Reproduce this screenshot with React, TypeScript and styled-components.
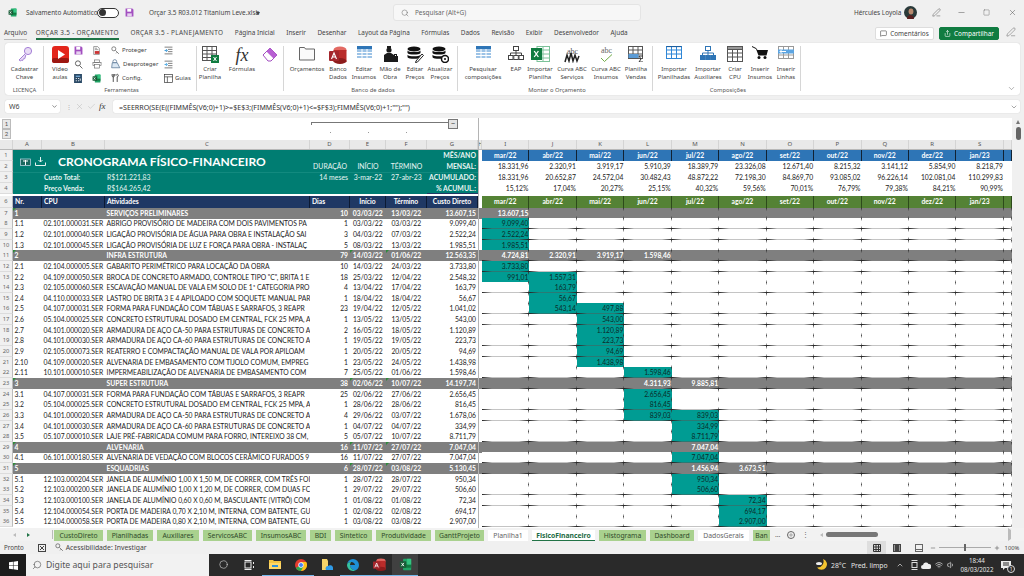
import React from "react";
import styled, { createGlobalStyle } from "styled-components";
import {
  Check,
  ChevronDown,
  Circle,
  MessageSquare,
  Minus,
  PenLine,
  Plus,
  Search,
  Share,
  Square,
  Volume1,
  Wifi,
  X,
} from "lucide-react";

const UI = `"Noto Sans", "Open Sans", sans-serif`;
const CELL = `Lato, "Liberation Sans", sans-serif`;
const COLS = "13px 29px 63px 205px 40px 36px 41px 51px 4px repeat(11, 47.45px) 1fr";

const MONTHS = ["mar/22", "abr/22", "mai/22", "jun/22", "jul/22", "ago/22", "set/22", "out/22", "nov/22", "dez/22", "jan/23"];
const MENSAL = ["18.331,96", "2.320,91", "3.919,17", "5.910,39", "18.389,79", "23.326,08", "12.671,40", "8.215,32", "3.141,12", "5.854,90", "8.218,79"];
const ACUM = ["18.331,96", "20.652,87", "24.572,04", "30.482,43", "48.872,22", "72.198,30", "84.869,70", "93.085,02", "96.226,14", "102.081,04", "110.299,83"];
const PCT = ["15,12%", "17,04%", "20,27%", "25,15%", "40,32%", "59,56%", "70,01%", "76,79%", "79,38%", "84,21%", "90,99%"];
const LETTERS = ["A", "B", "C", "D", "E", "F", "G", "H", "I", "J", "K", "L", "M", "N", "O", "P", "Q", "R", "S"];

type Line = {
  nr: string;
  cpu?: string;
  name: string;
  days: string;
  start: string;
  end: string;
  cost: string;
  months: Record<number, string>;
  band?: boolean;
  flags?: boolean;
};

const FORMA = "FORMA PARA FUNDAÇÃO COM TÁBUAS E SARRAFOS, 3 REAPR";
const CONCRETO = "CONCRETO ESTRUTURAL DOSADO EM CENTRAL, FCK 25 MPA, A";
const CA50 = "ARMADURA DE AÇO CA-50 PARA ESTRUTURAS DE CONCRETO A";
const CA60 = "ARMADURA DE AÇO CA-60 PARA ESTRUTURAS DE CONCRETO A";

const LINES: Line[] = [
  { nr: "1", name: "SERVIÇOS PRELIMINARES", days: "10", start: "03/03/22", end: "13/03/22", cost: "13.607,15", months: { 0: "13.607,15" }, band: true },
  { nr: "1.1", cpu: "02.101.000031.SER", name: "ABRIGO PROVISÓRIO DE MADEIRA COM DOIS PAVIMENTOS PA", days: "1", start: "03/03/22", end: "03/03/22", cost: "9.099,40", months: { 0: "9.099,40" } },
  { nr: "1.2", cpu: "02.101.000040.SER", name: "LIGAÇÃO PROVISÓRIA DE ÁGUA PARA OBRA E INSTALAÇÃO SAI", days: "3", start: "04/03/22", end: "07/03/22", cost: "2.522,24", months: { 0: "2.522,24" } },
  { nr: "1.3", cpu: "02.101.000045.SER", name: "LIGAÇÃO PROVISÓRIA DE LUZ E FORÇA PARA OBRA - INSTALAÇ", days: "5", start: "08/03/22", end: "13/03/22", cost: "1.985,51", months: { 0: "1.985,51" } },
  { nr: "2", name: "INFRA ESTRUTURA", days: "79", start: "14/03/22", end: "01/06/22", cost: "12.563,35", months: { 0: "4.724,81", 1: "2.320,91", 2: "3.919,17", 3: "1.598,46" }, band: true, flags: true },
  { nr: "2.1", cpu: "02.104.000005.SER", name: "GABARITO PERIMÉTRICO PARA LOCAÇÃO DA OBRA", days: "10", start: "14/03/22", end: "24/03/22", cost: "3.733,80", months: { 0: "3.733,80" } },
  { nr: "2.2", cpu: "04.109.000050.SER", name: 'BROCA DE CONCRETO ARMADO, CONTROLE TIPO "C", BRITA 1 E', days: "18", start: "25/03/22", end: "12/04/22", cost: "2.548,32", months: { 0: "991,01", 1: "1.557,31" } },
  { nr: "2.3", cpu: "02.105.000060.SER", name: "ESCAVAÇÃO MANUAL DE VALA EM SOLO DE 1ª CATEGORIA PRO", days: "4", start: "13/04/22", end: "17/04/22", cost: "163,79", months: { 1: "163,79" } },
  { nr: "2.4", cpu: "04.110.000033.SER", name: "LASTRO DE BRITA 3 E 4 APILOADO COM SOQUETE MANUAL PAR", days: "1", start: "18/04/22", end: "18/04/22", cost: "56,67", months: { 1: "56,67" } },
  { nr: "2.5", cpu: "04.107.000031.SER", name: FORMA, days: "23", start: "19/04/22", end: "12/05/22", cost: "1.041,02", months: { 1: "543,14", 2: "497,88" } },
  { nr: "2.6", cpu: "05.104.000025.SER", name: CONCRETO, days: "1", start: "13/05/22", end: "13/05/22", cost: "543,00", months: { 2: "543,00" } },
  { nr: "2.7", cpu: "04.101.000020.SER", name: CA50, days: "2", start: "16/05/22", end: "18/05/22", cost: "1.120,89", months: { 2: "1.120,89" } },
  { nr: "2.8", cpu: "04.101.000030.SER", name: CA60, days: "1", start: "19/05/22", end: "19/05/22", cost: "223,73", months: { 2: "223,73" } },
  { nr: "2.9", cpu: "02.105.000073.SER", name: "REATERRO E COMPACTAÇÃO MANUAL DE VALA POR APILOAM", days: "1", start: "20/05/22", end: "20/05/22", cost: "94,69", months: { 2: "94,69" } },
  { nr: "2.10", cpu: "04.109.000020.SER", name: "ALVENARIA DE EMBASAMENTO COM TIJOLO COMUM, EMPREG", days: "1", start: "23/05/22", end: "24/05/22", cost: "1.438,98", months: { 2: "1.438,98" } },
  { nr: "2.11", cpu: "10.101.000010.SER", name: "IMPERMEABILIZAÇÃO DE ALVENARIA DE EMBASAMENTO COM", days: "7", start: "25/05/22", end: "01/06/22", cost: "1.598,46", months: { 3: "1.598,46" } },
  { nr: "3", name: "SUPER ESTRUTURA", days: "38", start: "02/06/22", end: "10/07/22", cost: "14.197,74", months: { 3: "4.311,93", 4: "9.885,81" }, band: true, flags: true },
  { nr: "3.1", cpu: "04.107.000031.SER", name: FORMA, days: "25", start: "02/06/22", end: "27/06/22", cost: "2.656,45", months: { 3: "2.656,45" } },
  { nr: "3.2", cpu: "05.104.000025.SER", name: CONCRETO, days: "1", start: "28/06/22", end: "28/06/22", cost: "816,45", months: { 3: "816,45" } },
  { nr: "3.3", cpu: "04.101.000020.SER", name: CA50, days: "4", start: "29/06/22", end: "03/07/22", cost: "1.678,06", months: { 3: "839,03", 4: "839,03" } },
  { nr: "3.4", cpu: "04.101.000030.SER", name: CA60, days: "1", start: "04/07/22", end: "04/07/22", cost: "334,99", months: { 4: "334,99" } },
  { nr: "3.5", cpu: "05.107.000010.SER", name: "LAJE PRÉ-FABRICADA COMUM PARA FORRO, INTEREIXO 38 CM,", days: "5", start: "05/07/22", end: "10/07/22", cost: "8.711,79", months: { 4: "8.711,79" } },
  { nr: "4", name: "ALVENARIA", days: "16", start: "11/07/22", end: "27/07/22", cost: "7.047,04", months: { 4: "7.047,04" }, band: true, flags: true },
  { nr: "4.1", cpu: "06.101.000180.SER", name: "ALVENARIA DE VEDAÇÃO COM BLOCOS CERÂMICO FURADOS 9", days: "16", start: "11/07/22", end: "27/07/22", cost: "7.047,04", months: { 4: "7.047,04" } },
  { nr: "5", name: "ESQUADRIAS", days: "6", start: "28/07/22", end: "03/08/22", cost: "5.130,45", months: { 4: "1.456,94", 5: "3.673,51" }, band: true, flags: true },
  { nr: "5.1", cpu: "12.103.000204.SER", name: "JANELA DE ALUMÍNIO 1,00 X 1,50 M, DE CORRER, COM TRÊS FOI", days: "1", start: "28/07/22", end: "28/07/22", cost: "950,34", months: { 4: "950,34" } },
  { nr: "5.2", cpu: "12.103.000200.SER", name: "JANELA DE ALUMÍNIO 1,00 X 1,20 M, DE CORRER, COM DUAS FC", days: "1", start: "29/07/22", end: "29/07/22", cost: "506,60", months: { 4: "506,60" } },
  { nr: "5.3", cpu: "12.103.000100.SER", name: "JANELA DE ALUMÍNIO 0,60 X 0,60 M, BASCULANTE (VITRÔ) COM", days: "1", start: "01/08/22", end: "01/08/22", cost: "72,34", months: { 5: "72,34" } },
  { nr: "5.4", cpu: "12.104.000054.SER", name: "PORTA DE MADEIRA 0,70 X 2,10 M, INTERNA, COM BATENTE, GU", days: "1", start: "02/08/22", end: "02/08/22", cost: "694,17", months: { 5: "694,17" } },
  { nr: "5.5", cpu: "12.104.000058.SER", name: "PORTA DE MADEIRA 0,80 X 2,10 M, INTERNA, COM BATENTE, GU", days: "1", start: "03/08/22", end: "03/08/22", cost: "2.907,00", months: { 5: "2.907,00" } },
];

const TABS = [
  { label: "CustoDireto", w: 49 },
  { label: "Planilhadas", w: 46 },
  { label: "Auxiliares", w: 42 },
  { label: "ServicosABC", w: 49 },
  { label: "InsumosABC", w: 50 },
  { label: "BDI", w: 21 },
  { label: "Sintetico", w: 37 },
  { label: "Produtividade", w: 55 },
  { label: "GanttProjeto", w: 49 },
  { label: "Planilha1", w: 40, plain: true },
  { label: "FisicoFinanceiro", w: 63, active: true },
  { label: "Histograma", w: 47 },
  { label: "Dashboard", w: 44 },
  { label: "DadosGerais", w: 51, plain: true },
  { label: "Ban", w: 17 },
];

const GlobalStyle = createGlobalStyle`
  html, body { margin: 0; padding: 0; background: #f0f0f0; }
  * { box-sizing: border-box; }
`;

const Windowed = styled.div`
  width: 1024px;
  height: 576px;
  display: flex;
  flex-direction: column;
  overflow: hidden;
  background: #f0f0f0;
  font-family: ${UI};
  font-size: 6.4px;
  color: #444;
  white-space: nowrap;
`;

/* title bar */
const TitleBar = styled.div`
  height: 25px;
  display: flex;
  align-items: center;
  padding-left: 8px;
  flex: none;
`;
const AutoSave = styled.span`
  margin-left: 9px;
  width: 71px;
`;
const Toggle = styled.span`
  width: 22px;
  height: 10px;
  border: 1px solid #333;
  border-radius: 5px;
  background: #fff;
  display: flex;
  align-items: center;
  padding-left: 1px;
  margin-right: 6px;
  &::before {
    content: "";
    width: 7px;
    height: 7px;
    border-radius: 50%;
    background: #333;
  }
`;
const DocName = styled.span`
  margin-left: 15px;
  width: 107px;
`;
const Caret = styled.span`
  width: 0;
  height: 0;
  border: 2px solid transparent;
  border-top: 3px solid #444;
  margin-top: 3px;
`;
const SearchBox = styled.div`
  margin-left: 133px;
  width: 248px;
  height: 17px;
  background: #f7f7f7;
  border: 1px solid #e4e4e4;
  border-radius: 3px;
  display: flex;
  align-items: center;
  gap: 6px;
  padding-left: 7px;
  color: #666;
`;
const UserName = styled.span`
  margin-left: 213px;
  width: 50px;
`;
const WinControls = styled.div`
  display: flex;
  align-items: center;
  margin-left: 4px;
`;
const WinSlot = styled.span<{ $w: number }>`
  width: ${(p) => p.$w}px;
  display: flex;
  justify-content: center;
  color: #444;
`;

/* menu */
const MenuBar = styled.div`
  height: 18px;
  flex: none;
  display: flex;
  padding-left: 4px;
  gap: 11.5px;
`;
const MenuItem = styled.span<{ $on?: boolean; $muted?: boolean; $caps?: boolean }>`
  height: 15px;
  padding-top: 3px;
  line-height: 10px;
  letter-spacing: ${(p) => (p.$caps ? "0.3px" : "0")};
  margin-right: ${(p) => (p.$muted ? "-3px" : "0")};
  border-bottom: ${(p) => (p.$on ? "2px solid #217346" : p.$muted ? "1px solid #bbb" : "none")};
`;
const MenuRight = styled.div`
  margin-left: auto;
  display: flex;
  align-items: flex-start;
  padding: 2px 8px 0 0;
  gap: 5px;
`;
const CommentBtn = styled.span`
  width: 59px;
  height: 13px;
  background: #fff;
  border: 1px solid #ddd;
  border-radius: 2px;
  display: flex;
  align-items: center;
  justify-content: center;
  gap: 3px;
`;
const ShareBtn = styled(CommentBtn)`
  width: 60px;
  margin-right: 2px;
  background: #107c41;
  border-color: #107c41;
  color: #fff;
`;

/* ribbon */
const Ribbon = styled.div`
  height: 52px;
  flex: none;
  margin: 0 4px 0 5px;
  background: #fff;
  border-radius: 3px;
  box-shadow: 0 0 1px #bbb;
  display: flex;
  position: relative;
`;
const Group = styled.div<{ $w: number; $pad?: number }>`
  width: ${(p) => p.$w}px;
  padding-left: ${(p) => p.$pad || 0}px;
  position: relative;
  display: flex;
  flex-direction: column;
  &::after {
    content: "";
    position: absolute;
    right: 0;
    top: 3px;
    bottom: 4px;
    width: 1px;
    background: #d6d6d6;
  }
`;
const GroupBody = styled.div`
  display: flex;
  height: 43px;
`;
const GroupLabel = styled.div`
  font-size: 5.8px;
  line-height: 8px;
  text-align: center;
  color: #555;
`;
const Tool = styled.div<{ $w: number }>`
  width: ${(p) => p.$w}px;
  display: flex;
  flex-direction: column;
  align-items: center;
  padding-top: 3px;
  font-size: 6px;
  line-height: 8px;
`;
const ToolIcon = styled.div`
  height: 19px;
  display: flex;
  align-items: flex-start;
  justify-content: center;
`;
const SmallCol = styled.div<{ $w: number; $ml?: number }>`
  width: ${(p) => p.$w}px;
  margin-left: ${(p) => p.$ml || 0}px;
  display: flex;
  flex-direction: column;
  font-size: 6px;
`;
const SmallRow = styled.div`
  height: 14px;
  display: flex;
  align-items: center;
  gap: 2px;
`;
const Fx = styled.span<{ $size: number }>`
  font-family: "Liberation Serif", serif;
  font-style: italic;
  font-size: ${(p) => p.$size}px;
  color: #333;
  line-height: 1;
`;
const RibbonChevron = styled.span`
  position: absolute;
  right: 4px;
  bottom: 2px;
  color: #666;
  display: flex;
`;

/* formula bar */
const FormulaBar = styled.div`
  height: 13px;
  flex: none;
  margin: 5px 4px 5px 5px;
  display: flex;
  align-items: center;
`;
const NameBox = styled.div`
  width: 55px;
  height: 13px;
  background: #fff;
  border-radius: 2px;
  box-shadow: 0 0 1px #bbb;
  display: flex;
  align-items: center;
  justify-content: space-between;
  padding: 0 2px 0 4px;
  font-size: 7px;
`;
const FxButtons = styled.div`
  width: 53px;
  display: flex;
  align-items: center;
  gap: 3px;
  color: #aaa;
  padding-left: 6px;
`;
const FormulaInput = styled.div`
  flex: 1;
  height: 13px;
  background: #fff;
  border-radius: 2px;
  box-shadow: 0 0 1px #bbb;
  display: flex;
  align-items: center;
  justify-content: space-between;
  padding: 0 2px 0 6px;
  font-size: 7.1px;
  color: #333;
`;

/* sheet */
const SheetWrap = styled.div`
  height: 410px;
  flex: none;
  display: flex;
  position: relative;
`;
const Sheet = styled.div`
  flex: 1;
  min-width: 0;
  background: #fff;
  overflow: hidden;
  font-family: ${CELL};
  font-size: 6.75px;
  color: #222;
`;
const FreezeLine = styled.div`
  position: absolute;
  left: 478px;
  top: 0;
  bottom: 0;
  width: 1px;
  background: #b4b4b4;
`;
const OutlineStrip = styled.div`
  height: 22px;
  display: flex;
`;
const OutlineNums = styled.div`
  width: 13px;
  padding: 1px 0 0 2px;
`;
const OutlineNum = styled.div`
  width: 9px;
  height: 10px;
  background: #e8e8e8;
  border: 1px solid #bbb;
  font-size: 6px;
  line-height: 8px;
  text-align: center;
  color: #555;
`;
const OutlineTrack = styled.div`
  margin-left: 298px;
  width: 147px;
  position: relative;
  padding-top: 4px;
`;
const OutlineLine = styled.div`
  height: 3px;
  width: 138px;
  border-top: 1px solid #777;
  border-left: 1px solid #777;
`;
const OutlineDots = styled.div`
  display: flex;
  gap: 37px;
  padding: 7px 0 0 19px;
`;
const OutlineDot = styled.i`
  width: 1px;
  height: 1px;
  background: #999;
`;
const OutlineMinus = styled.div`
  position: absolute;
  left: 137px;
  top: 1px;
  width: 10px;
  height: 10px;
  background: #e4e4e4;
  border: 1px solid #777;
  font-size: 8px;
  line-height: 6px;
  text-align: center;
  color: #333;
`;
const ColHead = styled.div`
  display: grid;
  grid-template-columns: ${COLS};
  height: 10px;
  background: #e9e9e9;
  border-bottom: 1px solid #b8b8b8;
`;
const ColCell = styled.div`
  text-align: center;
  font-family: ${UI};
  font-size: 6px;
  line-height: 9px;
  color: #555;
  border-right: 1px solid #d4d4d4;
  overflow: hidden;
`;
const HeadGrid = styled.div`
  display: grid;
  grid-template-columns: ${COLS};
  grid-template-rows: repeat(4, 11px);
  margin-bottom: 2px;
`;
const RowNum = styled.div<{ $r?: number }>`
  grid-column: 1;
  grid-row: ${(p) => p.$r || "auto"};
  background: #f0f0f0;
  border-right: 1px solid #bbb;
  border-bottom: 1px solid #dcdcdc;
  font-family: ${UI};
  font-weight: 400;
  font-size: 5.8px;
  line-height: 10px;
  text-align: center;
  color: #666;
`;
const TealBand = styled.div`
  grid-column: 2 / 9;
  grid-row: 1 / 5;
  background: linear-gradient(#007d72 22px, #128a7f 22px, #128a7f 23px, #007d72 23px);
`;
const TitleBox = styled.div`
  grid-column: 2 / 6;
  grid-row: 1 / 3;
  display: flex;
  align-items: center;
  padding-left: 7px;
  gap: 4px;
  color: #fff;
`;
const Title = styled.span`
  margin-left: 8px;
  font-size: 12px;
  font-weight: 700;
  letter-spacing: 0.05px;
`;
const TealText = styled.div<{ $c: number; $r: number; $align?: string; $bold?: boolean; $under?: boolean }>`
  grid-column: ${(p) => p.$c};
  grid-row: ${(p) => p.$r};
  color: #e8f5f3;
  font-weight: ${(p) => (p.$bold ? 700 : 400)};
  text-align: ${(p) => p.$align || "left"};
  padding: 0 2px;
  line-height: 11px;
  font-size: 6.9px;
  border-bottom: ${(p) => (p.$under ? "1px solid #1f3864" : "none")};
`;
const MonthTop = styled.div<{ $c: number; $r: number; $head?: boolean }>`
  grid-column: ${(p) => p.$c};
  grid-row: ${(p) => p.$r};
  text-align: ${(p) => (p.$head ? "center" : "right")};
  line-height: 11px;
  padding-right: ${(p) => (p.$head ? 0 : 1)}px;
  background: ${(p) => (p.$head ? "#2e75b6" : "transparent")};
  color: ${(p) => (p.$head ? "#fff" : "#222")};
  font-weight: ${(p) => (p.$head ? 700 : 400)};
  border-right: ${(p) => (p.$head ? "1px solid #123" : "none")};
`;
const Row = styled.div<{ $head?: boolean; $band?: boolean }>`
  display: grid;
  grid-template-columns: ${COLS};
  height: ${(p) => (p.$head ? "11.7px" : "10.65px")};
  line-height: ${(p) => (p.$head ? "11.7px" : "10.65px")};
  color: ${(p) => (p.$band ? "#fff" : "#222")};
  font-weight: ${(p) => (p.$band ? 700 : 400)};
`;
const Cell = styled.div<{ $align?: string; $flag?: boolean; $band?: boolean }>`
  position: relative;
  overflow: hidden;
  padding: 0 2px 0 1.5px;
  text-align: ${(p) => p.$align || "left"};
  background: ${(p) => (p.$band ? "#7f7f7f" : "transparent")};
  &::before {
    content: "";
    display: ${(p) => (p.$flag ? "block" : "none")};
    position: absolute;
    left: 0;
    top: 0;
    border-top: 3px solid #2f8a3b;
    border-right: 3px solid transparent;
  }
`;
const NavyCell = styled.div<{ $align?: string }>`
  background: #1f3864;
  color: #fff;
  font-weight: 700;
  padding: 0 2px;
  text-align: ${(p) => p.$align || "left"};
  border-right: 1px solid #0c1a33;
`;
const GreenCell = styled.div`
  background: #548235;
  color: #fff;
  font-weight: 700;
  text-align: center;
  border-right: 1px solid #2d4a1b;
`;
const MonthCell = styled.div<{ $fill?: boolean; $band?: boolean }>`
  position: relative;
  padding-right: 1px;
  text-align: right;
  background-color: ${(p) => (p.$band ? "#7f7f7f" : p.$fill ? "#009c93" : "#fff")};
  color: ${(p) => (p.$band ? "#fff" : "#0b2b2a")};
  &::after {
    content: "";
    position: absolute;
    left: 0;
    right: 0;
    bottom: 0;
    height: 1px;
    background: linear-gradient(
      90deg,
      #222,
      ${(p) => (p.$band ? "#7f7f7f" : p.$fill ? "#2a7a74" : "#c4c4c4")} 10px,
      ${(p) => (p.$band ? "#7f7f7f" : p.$fill ? "#2a7a74" : "#c4c4c4")} calc(100% - 10px),
      #222
    );
  }
  &::before {
    content: "";
    position: absolute;
    right: 0;
    top: 0;
    bottom: 0;
    width: 1px;
    background: linear-gradient(180deg, #333, transparent 30%, transparent 70%, #333);
  }
`;

/* scrollbar */
const VScroll = styled.div`
  width: 12px;
  flex: none;
  display: flex;
  flex-direction: column;
  align-items: center;
  padding-top: 2px;
  background: #f0f0f0;
`;
const ArrowUp = styled.i`
  border: 2.5px solid transparent;
  border-bottom: 4px solid #777;
  border-top: 0;
`;
const VThumb = styled.div`
  margin-top: 3px;
  width: 5px;
  height: 13px;
  border-radius: 3px;
  background: #666;
`;

/* tabs */
const TabBar = styled.div`
  height: 13px;
  flex: none;
  display: flex;
  align-items: stretch;
  background: #f2f2f2;
  font-size: 6.8px;
`;
const TabNav = styled.div`
  width: 53px;
  display: flex;
  align-items: center;
  border-right: 1px solid #bbb;
  gap: 11px;
  padding-left: 13px;
  margin: 2px 0;
`;
const NavArrow = styled.i<{ $dark?: boolean; $left?: boolean }>`
  border: 2px solid transparent;
  border-left: ${(p) => (p.$left ? "0" : `3px solid ${p.$dark ? "#217346" : "#bbb"}`)};
  border-right: ${(p) => (p.$left ? `3px solid ${p.$dark ? "#217346" : "#bbb"}` : "0")};
`;
const Tabs = styled.div`
  display: flex;
  gap: 4px;
  padding-top: 2px;
  margin-left: 1px;
`;
const Tab = styled.div<{ $w: number; $plain?: boolean; $active?: boolean }>`
  width: ${(p) => p.$w}px;
  display: flex;
  align-items: center;
  justify-content: center;
  overflow: hidden;
  background: ${(p) => (p.$plain || p.$active ? "#fff" : "#a9d18e")};
  color: ${(p) => (p.$active ? "#1a6a43" : p.$plain ? "#666" : "#2f4a2a")};
  font-weight: ${(p) => (p.$active ? 700 : 400)};
  border-bottom: ${(p) => (p.$active ? "1px solid #217346" : "none")};
`;
const TabExtras = styled.div`
  width: 47px;
  display: flex;
  align-items: center;
  gap: 7px;
  padding-left: 5px;
  color: #666;
`;
const AddSheet = styled.span`
  width: 8px;
  height: 8px;
  border: 1px solid #666;
  border-radius: 50%;
  display: flex;
  align-items: center;
  justify-content: center;
`;
const HScroll = styled.div`
  flex: 1;
  display: flex;
  align-items: center;
  padding: 0 13px 0 3px;
`;
const HThumb = styled.div`
  margin-left: 3px;
  width: 52px;
  height: 5px;
  border-radius: 3px;
  background: #777;
`;
const HEnd = styled.div`
  margin-left: auto;
`;

/* status */
const StatusBar = styled.div`
  height: 13px;
  flex: none;
  display: flex;
  align-items: center;
  padding-left: 4px;
  font-size: 6.2px;
  color: #444;
`;
const StatusCheck = styled.span`
  margin-left: 14px;
  display: flex;
`;
const StatusAccess = styled.span`
  margin-left: 9px;
  display: flex;
  align-items: center;
  gap: 2px;
  font-size: 6.8px;
`;
const StatusRight = styled.div`
  margin-left: auto;
  display: flex;
  align-items: center;
  height: 100%;
`;
const ViewBtn = styled.span<{ $on?: boolean; $w: number }>`
  width: ${(p) => p.$w}px;
  height: 100%;
  display: flex;
  align-items: center;
  justify-content: center;
  background: ${(p) => (p.$on ? "#dedede" : "transparent")};
`;
const ZoomTrack = styled.div`
  width: 52px;
  height: 1px;
  margin: 0 3px;
  background: #aaa;
  position: relative;
`;
const ZoomThumb = styled.i`
  position: absolute;
  left: 25px;
  top: -3px;
  width: 2px;
  height: 7px;
  background: #666;
`;
const ZoomPct = styled.span`
  width: 24px;
  text-align: center;
  font-size: 5.8px;
`;

/* taskbar */
const Taskbar = styled.div`
  height: 22px;
  flex: none;
  background: #2a2a2a;
  display: flex;
  align-items: stretch;
  color: #e6e6e6;
`;
const StartBtn = styled.div`
  width: 26px;
  background: #1c1c1c;
  display: flex;
  align-items: center;
  justify-content: center;
`;
const TaskSearch = styled.div`
  width: 183px;
  background: #f2f2f2;
  display: flex;
  align-items: center;
  gap: 4px;
  padding-left: 6px;
  color: #555;
  font-size: 8.7px;
`;
const TaskApps = styled.div`
  display: flex;
  margin-left: 1px;
`;
const TaskApp = styled.div<{ $w: number; $on?: boolean; $open?: boolean }>`
  width: ${(p) => p.$w}px;
  display: flex;
  align-items: center;
  justify-content: center;
  background: ${(p) => (p.$on ? "#404040" : "transparent")};
  border-bottom: 1px solid ${(p) => (p.$open ? "#76b9ed" : "transparent")};
`;
const Tray = styled.div`
  margin-left: auto;
  display: flex;
  align-items: center;
  font-size: 6.8px;
`;
const TrayText = styled.span<{ $w: number }>`
  width: ${(p) => p.$w}px;
`;
const TrayIcon = styled.span<{ $w: number }>`
  width: ${(p) => p.$w}px;
  display: flex;
  justify-content: center;
`;
const Clock = styled.div`
  width: 42px;
  text-align: center;
  font-size: 6.2px;
  line-height: 9px;
`;
const NotifyBox = styled.div`
  width: 26px;
  padding-right: 10px;
  display: flex;
  justify-content: center;
  position: relative;
`;
const NotifyBadge = styled.span`
  position: absolute;
  right: 9px;
  bottom: -3px;
  width: 8px;
  height: 8px;
  border-radius: 50%;
  border: 1px solid #ddd;
  background: #2a2a2a;
  font-size: 5.5px;
  line-height: 6px;
  text-align: center;
`;

/* drawings */
const ExcelMark = ({ s = 9 }: { s?: number }) => (
  <svg width={s} height={s} viewBox="0 0 16 16">
    <rect x="5" y="1" width="10" height="14" rx="1" fill="#21a366" />
    <rect x="5" y="8" width="10" height="4" fill="#107c41" />
    <rect x="10" y="1" width="5" height="7" fill="#33c481" />
    <rect x="1" y="4" width="8" height="8" rx="1" fill="#185c37" />
    <path d="M3 6l3 4M6 6l-3 4" stroke="#fff" strokeWidth="1.1" />
  </svg>
);
const Floppy = ({ s = 9 }: { s?: number }) => (
  <svg width={s} height={s} viewBox="0 0 16 16">
    <path d="M1 1h12l2 2v12H1z" fill="#a24fc0" />
    <rect x="4" y="1.5" width="7" height="5" fill="#fff" />
    <rect x="4" y="9.5" width="8" height="5.5" fill="#e6d2ee" />
  </svg>
);
const KeyIcon = () => (
  <svg width="16" height="16" viewBox="0 0 16 16" fill="#e9dcf5" stroke="#a47fd6" strokeWidth="1">
    <circle cx="11" cy="5" r="3.6" />
    <path d="M8.5 7.5L2 14l1.6 1 1-1 1 .6.8-1.8 1.4-.2 1-3.6" />
  </svg>
);
const VideoIcon = () => (
  <svg width="17" height="17" viewBox="0 0 17 17">
    <rect width="17" height="17" rx="3" fill="#e3261c" />
    <rect y="12" width="17" height="5" rx="2" fill="#9c1712" />
    <path d="M6 4l7 4.5L6 13z" fill="#fff" />
  </svg>
);
const TinyDoc = () => (
  <svg width="9" height="9" viewBox="0 0 16 16">
    <path d="M3 1h7l3 3v11H3z" fill="#fff" stroke="#555" />
    <rect x="5" y="9" width="8" height="5" fill="#c33" />
    <path d="M5 4h4M5 6.5h6" stroke="#555" />
  </svg>
);
const TinySearch = () => (
  <svg width="9" height="9" viewBox="0 0 16 16" fill="none" stroke="#555" strokeWidth="1.6">
    <circle cx="7" cy="6" r="4.5" />
    <path d="M10 10l5 5" />
  </svg>
);
const TinyPrinter = () => (
  <svg width="10" height="10" viewBox="0 0 16 16" fill="none" stroke="#666">
    <rect x="4" y="1.5" width="8" height="4" />
    <rect x="1.5" y="5.5" width="13" height="5" />
    <rect x="4" y="9" width="8" height="5.5" fill="#fff" />
  </svg>
);
const TinyCalc = () => (
  <svg width="8" height="9" viewBox="0 0 14 16">
    <rect width="14" height="16" fill="#2b4a66" />
    <path d="M3 4h8" stroke="#7fb7e8" strokeWidth="2" />
    <path d="M3 8h2M7 8h2M3 12h2M7 12h2M11 8v4" stroke="#fff" strokeWidth="1.5" />
  </svg>
);
const KeyGlass = ({ fill = "#fff" }: { fill?: string }) => (
  <svg width="9" height="9" viewBox="0 0 16 16" fill={fill} stroke="#444" strokeWidth="1.1">
    <circle cx="5" cy="5" r="3.6" />
    <path d="M8 8l6 6M11 11l-2 2" />
  </svg>
);
const LockGlass = () => (
  <svg width="10" height="10" viewBox="0 0 16 16" fill="none" stroke="#4a6a8a" strokeWidth="1.1">
    <path d="M6 1a3 3 0 013 3v2H3V4a3 3 0 013-3z" />
    <path d="M2 6h8l4 8H1z" fill="#dbe8f4" />
  </svg>
);
const Tools = () => (
  <svg width="9" height="10" viewBox="0 0 16 16" fill="none" stroke="#333" strokeWidth="1.5">
    <path d="M4 1v4M2 1v3a2 2 0 004 0V1M4 6v9" />
    <path d="M11 1a3 3 0 012 3c0 1-1 2-2 2v9M9 1v3" />
  </svg>
);
const IndentLines = ({ color = "#1e88d2" }: { color?: string }) => (
  <svg width="9" height="9" viewBox="0 0 16 16" stroke="#333" strokeWidth="1.1">
    <path d="M1 2h14M7 6h8M7 10h8M1 14h14" />
    <path d="M1 8h4M3.5 5.5L6 8l-2.5 2.5" stroke={color} fill="none" strokeWidth="1.5" />
  </svg>
);
const GridTiny = () => (
  <svg width="9" height="9" viewBox="0 0 16 16" fill="none" stroke="#333" strokeWidth="1.2">
    <rect x="1" y="1" width="14" height="14" />
    <path d="M1 5h14M6 5v10" />
  </svg>
);
const SheetNew = () => (
  <svg width="17" height="17" viewBox="0 0 17 17" fill="none" stroke="#555">
    <rect x=".5" y=".5" width="14" height="14" />
    <path d="M.5 4.5h14M.5 8h14M.5 11.5h14M5 .5v14M10 .5v14" />
    <rect x="9" y="9" width="8" height="8" fill="#107c41" stroke="none" />
    <path d="M11.5 11l3 4M14.5 11l-3 4" stroke="#fff" />
  </svg>
);
const Eraser = () => (
  <svg width="16" height="16" viewBox="0 0 16 16">
    <path d="M1 9l7-7 7 7-6 6H6z" fill="#fff" stroke="#a24fc0" />
    <path d="M8 2l7 7-3.5 3.5-7-7z" fill="#b760d2" />
  </svg>
);
const FolderOutline = () => (
  <svg width="16" height="15" viewBox="0 0 16 15" fill="#fafafa" stroke="#666">
    <path d="M.5 14V1.5h5l1 1.5h9v11z" />
  </svg>
);
const AccessMark = ({ s = 18 }: { s?: number }) => (
  <svg width={s} height={s} viewBox="0 0 18 18">
    <ellipse cx="11" cy="4" rx="6.5" ry="3.4" fill="#e36a63" />
    <rect x="4.5" y="4" width="13" height="12" fill="#b92c2a" />
    <ellipse cx="11" cy="15" rx="6.5" ry="3" fill="#8c1c1c" />
    <rect y="5" width="10" height="10" rx="1" fill="#a4262c" />
    <path d="M2.5 13L5 7l2.5 6M3.4 11h3.2" stroke="#fff" fill="none" strokeWidth="1.1" />
  </svg>
);
const BlueTable = ({ s = 15 }: { s?: number }) => (
  <svg width={s} height={s * 0.8} viewBox="0 0 15 12">
    <rect width="15" height="12" fill="#2e75b6" />
    <rect x="0" y="3" width="15" height="9" fill="#9dc3e6" />
    <path d="M0 6.5h15M0 9.5h15M5 3v9M10 3v9" stroke="#fff" />
  </svg>
);
const Worker = () => (
  <svg width="15" height="17" viewBox="0 0 15 17" fill="#1b1b1b">
    <circle cx="6" cy="4" r="2.6" />
    <rect x="4" y="0" width="4" height="2" />
    <path d="M1 16V9l3-2h4l3 2v7z" />
    <rect x="10" y="10" width="5" height="6" />
    <rect x="11.5" y="8.5" width="2" height="2" fill="none" stroke="#1b1b1b" />
  </svg>
);
const DbEdit = () => (
  <svg width="17" height="17" viewBox="0 0 17 17">
    <g fill="#111">
      <ellipse cx="7" cy="3" rx="6.5" ry="2.6" />
      <path d="M.5 4.5c1 2 12 2 13 0V7c-1 2-12 2-13 0zM.5 8.7c1 2 12 2 13 0v2.5c-1 2-12 2-13 0z" />
    </g>
    <path d="M9 15l6-7 1.5 1.4-6 6.6-2 .6z" fill="#fff" stroke="#222" />
  </svg>
);
const DbGear = () => (
  <svg width="17" height="17" viewBox="0 0 17 17">
    <g fill="#111">
      <ellipse cx="7" cy="3" rx="6.5" ry="2.6" />
      <path d="M.5 4.5c1 2 12 2 13 0V7c-1 2-12 2-13 0zM.5 8.7c1 2 12 2 13 0v2.5c-1 2-12 2-13 0z" />
    </g>
    <circle cx="13" cy="13" r="3.5" fill="#fff" stroke="#111" strokeWidth="1.5" />
    <circle cx="13" cy="13" r="1" fill="#111" />
  </svg>
);
const Tree = ({ fill = "none", stroke = "#444" }: { fill?: string; stroke?: string }) => (
  <svg width="16" height="14" viewBox="0 0 16 14" fill={fill === "none" ? "#fff" : fill} stroke={stroke}>
    <rect x="5.5" y=".5" width="5" height="4" fill="#fff" />
    <path d="M8 4.5V7M2.5 9V7h11v2M8 7v2" fill="none" />
    <rect x=".5" y="9.5" width="4.5" height="4" />
    <rect x="5.8" y="9.5" width="4.5" height="4" />
    <rect x="11" y="9.5" width="4.5" height="4" />
  </svg>
);
const ExcelSheet = () => (
  <svg width="19" height="16" viewBox="0 0 19 16">
    <rect x="6" y=".5" width="12.5" height="15" fill="#fff" stroke="#7cc29a" />
    <path d="M6 4h12.5M6 8h12.5M6 12h12.5M12 .5v15" stroke="#7cc29a" />
    <rect y="2" width="11" height="12" fill="#107c41" />
    <path d="M3.2 5l4.2 6M7.4 5l-4.2 6" stroke="#fff" strokeWidth="1.3" />
  </svg>
);
const AbcWave = () => (
  <svg width="17" height="17" viewBox="0 0 17 17">
    <text x="8.5" y="8" textAnchor="middle" fontSize="8" fill="#555" fontFamily="Liberation Serif, serif">abc</text>
    <path d="M1 16l2-7 2 6 2-8 2 8 2-6 2 6 2-5" stroke="#222" strokeWidth="1.5" fill="none" />
  </svg>
);
const AbcCheck = () => (
  <svg width="17" height="17" viewBox="0 0 17 17">
    <text x="8.5" y="7" textAnchor="middle" fontSize="8" fill="#666" fontFamily="Liberation Serif, serif">abc</text>
    <path d="M3 12l3.5 3.5L14 8.5" stroke="#70ad47" strokeWidth="1" fill="none" />
  </svg>
);
const SumTable = () => (
  <svg width="16" height="16" viewBox="0 0 16 16" fill="none" stroke="#555">
    <rect x=".5" y=".5" width="14" height="12" />
    <path d="M.5 4h14M.5 8h14M5 .5v12M10 .5v12" />
    <rect x=".5" y="8" width="10" height="4" fill="#5b9bd5" stroke="none" />
    <path d="M15 10h-4l2 3-2 3h4" stroke="#333" />
  </svg>
);
const LineTable = () => (
  <svg width="16" height="13" viewBox="0 0 16 13" fill="none" stroke="#2e86d6">
    <rect x=".5" y=".5" width="15" height="12" />
    <path d="M.5 4h15M.5 8h15M5.5 .5v12M10.5 .5v12" />
    <path d="M.5 .5h15" stroke="#1d5f9f" strokeWidth="1.2" />
  </svg>
);
const GrayTable = () => (
  <svg width="16" height="16" viewBox="0 0 16 16" fill="#fff" stroke="#555">
    <rect x=".5" y=".5" width="15" height="15" />
    <rect x=".5" y=".5" width="15" height="3" fill="#999" />
    <path d="M.5 7h15M.5 11h15M5.5 3v12M10.5 3v12" fill="none" />
  </svg>
);
const Cart = () => (
  <svg width="16" height="13" viewBox="0 0 16 13" fill="#111">
    <path d="M0 0l4 2 1.5 2H16l-1.5 5.5h-8L4 3 0 1z" />
    <circle cx="7" cy="11.5" r="1.5" />
    <circle cx="13" cy="11.5" r="1.5" />
  </svg>
);
const RowTable = () => (
  <svg width="16" height="13" viewBox="0 0 16 13" fill="none" stroke="#999">
    <rect x=".5" y=".5" width="15" height="12" />
    <path d="M.5 9h15M5.5 .5v12M10.5 .5v12" />
    <rect x="0" y="3.5" width="16" height="4" fill="#5da5e2" stroke="none" />
    <path d="M8 5.5H2M4 3.5l-2 2 2 2" stroke="#fff" />
  </svg>
);
const SheetIconUp = () => (
  <svg width="11" height="9" viewBox="0 0 11 9">
    <rect x=".5" y="2" width="10" height="6.5" fill="#19675f" stroke="#cde" strokeWidth=".7" />
    <path d="M5.5 3v5M3 4h5" stroke="#fff" />
  </svg>
);
const SheetIconDown = () => (
  <svg width="11" height="9" viewBox="0 0 11 9" fill="none" stroke="#e7f3f1">
    <path d="M.5 5.5v3h10v-3" />
    <path d="M5.5 0v5M3.5 3l2 2 2-2" />
  </svg>
);
const Avatar = () => (
  <svg width="13" height="13" viewBox="0 0 13 13">
    <circle cx="6.5" cy="6.5" r="6.5" fill="#2a3a3a" />
    <ellipse cx="7" cy="5.5" rx="2.4" ry="3" fill="#b98a6f" />
    <path d="M3 13c0-3 2-4 3.5-4s3.5 1 3.5 4z" fill="#5a1f1f" />
  </svg>
);
const WindowsLogo = () => (
  <svg width="9" height="9" viewBox="0 0 10 10" fill="#fff">
    <path d="M0 1.4L4.4.8v3.9H0zM5 .7L10 0v4.7H5zM0 5.3h4.4v3.9L0 8.6zM5 5.3h5V10l-5-.7z" />
  </svg>
);
const TaskView = () => (
  <svg width="11" height="10" viewBox="0 0 11 10" fill="none" stroke="#eee">
    <rect x="1" y="2" width="6" height="6" />
    <path d="M.5 .5h7M.5 9.5h7M9.5 2v2M9.5 6v2" />
  </svg>
);
const FolderApp = () => (
  <svg width="12" height="11" viewBox="0 0 12 11">
    <path d="M0 1h4l1 1h7v8H0z" fill="#f4c542" />
    <rect x="0" y="4" width="12" height="6" fill="#ffd766" />
    <rect x="3" y="6" width="6" height="2" fill="#2f8fd8" />
  </svg>
);
const ChromeApp = () => (
  <svg width="12" height="12" viewBox="0 0 12 12">
    <circle cx="6" cy="6" r="6" fill="#e33b2e" />
    <path d="M6 6L.8 9A6 6 0 006 12l3-3z" fill="#2da94f" />
    <path d="M6 3h5.2A6 6 0 016 12l3-6z" fill="#fbc116" />
    <circle cx="6" cy="6" r="2.7" fill="#fff" />
    <circle cx="6" cy="6" r="2" fill="#4285f4" />
  </svg>
);
const FilesApp = () => (
  <svg width="12" height="12" viewBox="0 0 12 12">
    <path d="M1 0h5l1 2v9H1z" fill="#f6d469" />
    <path d="M5 11a2.5 2.5 0 012-4 3 3 0 015 1.5V11z" fill="#2f9be8" />
  </svg>
);
const EdgeApp = () => (
  <svg width="12" height="12" viewBox="0 0 12 12">
    <path d="M6 0a6 6 0 00-6 6c0-2 2-3 4-3 2.5 0 4 1.5 4 3H3c0 3 3 6 6 5 2-.8 3-3 3-5a6 6 0 00-6-6z" fill="#1e8fd6" />
    <path d="M0 6c0 3 3 6 6 6 1 0 2-.2 3-1-3 1-6-2-6-5 0-1 .5-2 1-3C2 3 0 4 0 6z" fill="#35c1a0" />
  </svg>
);
const MoonCloud = () => (
  <svg width="12" height="12" viewBox="0 0 12 12">
    <path d="M7 0a5.5 5.5 0 11-6 8.5A6 6 0 007 0z" fill="#f4c430" />
    <ellipse cx="3" cy="4.5" rx="3" ry="1.6" fill="#eee" />
  </svg>
);
const CloudTray = () => (
  <svg width="10" height="7" viewBox="0 0 10 7" fill="#eee">
    <path d="M2 7a2 2 0 010-4 3 3 0 015.5-1A2.5 2.5 0 018 7z" />
  </svg>
);
const DeviceTray = () => (
  <svg width="7" height="10" viewBox="0 0 7 10" fill="none" stroke="#ddd">
    <path d="M.5 .5h6M.5 9.5h6" />
    <rect x="1" y="2.5" width="5" height="5" />
  </svg>
);
const NotifyIcon = () => (
  <svg width="10" height="9" viewBox="0 0 10 9" fill="#eee">
    <path d="M0 0h10v7H4L2 9V7H0z" />
    <path d="M2 2h6M2 4h6" stroke="#2a2a2a" />
  </svg>
);
const ViewGrid = () => (
  <svg width="8" height="8" viewBox="0 0 8 8" fill="none" stroke="#333">
    <path d="M.5 .5h7v7h-7zM.5 3h7M.5 5.5h7M3 .5v7M5.5 .5v7" />
  </svg>
);
const ViewPage = () => (
  <svg width="8" height="8" viewBox="0 0 8 8" fill="none" stroke="#444">
    <rect x=".5" y=".5" width="7" height="7" />
    <rect x="2" y="1" width="4" height="6" fill="#444" />
  </svg>
);
const ViewBreak = () => (
  <svg width="8" height="8" viewBox="0 0 8 8" fill="none" stroke="#666">
    <rect x=".5" y=".5" width="7" height="7" />
    <path d="M.5 5.5h7" />
  </svg>
);
const CheckSheet = () => (
  <svg width="8" height="8" viewBox="0 0 8 8" fill="none" stroke="#444">
    <rect x=".5" y=".5" width="7" height="7" />
    <path d="M2 2l4 4M6 2L2 6" />
  </svg>
);

type Btn = { w: number; icon: React.ReactNode; l1: string; l2?: string };

function ToolButton({ w, icon, l1, l2 }: Btn) {
  return (
    <Tool $w={w}>
      <ToolIcon>{icon}</ToolIcon>
      {l1 && <div>{l1}</div>}
      {l2 && <div>{l2}</div>}
    </Tool>
  );
}

const BANCO: Btn[] = [
  { w: 38, icon: <FolderOutline />, l1: "Orçamentos" },
  { w: 24, icon: <AccessMark />, l1: "Banco", l2: "Dados" },
  { w: 28, icon: <BlueTable />, l1: "Editar", l2: "Insumos" },
  { w: 24, icon: <Worker />, l1: "Mão de", l2: "Obra" },
  { w: 26, icon: <DbEdit />, l1: "Editar", l2: "Preços" },
  { w: 24, icon: <DbGear />, l1: "Atualizar", l2: "Preços" },
];
const MONTAR: Btn[] = [
  { w: 44, icon: <BlueTable />, l1: "Pesquisar", l2: "composições" },
  { w: 22, icon: <Tree />, l1: "EAP" },
  { w: 26, icon: <ExcelSheet />, l1: "Importar", l2: "Planilha" },
  { w: 38, icon: <AbcWave />, l1: "Curva ABC", l2: "Serviços" },
  { w: 30, icon: <AbcCheck />, l1: "Curva ABC", l2: "Insumos" },
  { w: 30, icon: <SumTable />, l1: "Planilha", l2: "Vendas" },
];
const COMPOS: Btn[] = [
  { w: 38, icon: <LineTable />, l1: "Importar", l2: "Planilhadas" },
  { w: 30, icon: <Tree fill="#2e75b6" stroke="#2e75b6" />, l1: "Importar", l2: "Auxiliares" },
  { w: 24, icon: <GrayTable />, l1: "Criar", l2: "CPU" },
  { w: 26, icon: <Cart />, l1: "Inserir", l2: "Insumos" },
  { w: 26, icon: <RowTable />, l1: "Inserir", l2: "Linhas" },
];

function App() {
  return (
    <Windowed>
      <GlobalStyle />
      <TitleBar>
        <ExcelMark />
        <AutoSave>Salvamento Automático</AutoSave>
        <Toggle />
        <Floppy />
        <DocName>Orçar 3.5 R03.012 Titanium Leve.xlsb</DocName>
        <Caret />
        <SearchBox>
          <Search size={8} strokeWidth={1.5} />
          Pesquisar (Alt+G)
        </SearchBox>
        <UserName>Hércules Loyola</UserName>
        <Avatar />
        <WinControls>
          <WinSlot $w={30}><PenLine size={9} strokeWidth={1.2} /></WinSlot>
          <WinSlot $w={20}><Minus size={9} strokeWidth={1.2} /></WinSlot>
          <WinSlot $w={30}><Square size={7} strokeWidth={1.2} /></WinSlot>
          <WinSlot $w={22}><X size={9} strokeWidth={1.2} /></WinSlot>
        </WinControls>
      </TitleBar>

      <MenuBar>
        <MenuItem $muted>Arquivo</MenuItem>
        <MenuItem $on $caps>ORÇAR 3.5 - ORÇAMENTO</MenuItem>
        <MenuItem $caps>ORÇAR 3.5 - PLANEJAMENTO</MenuItem>
        <MenuItem>Página Inicial</MenuItem>
        <MenuItem>Inserir</MenuItem>
        <MenuItem>Desenhar</MenuItem>
        <MenuItem>Layout da Página</MenuItem>
        <MenuItem>Fórmulas</MenuItem>
        <MenuItem>Dados</MenuItem>
        <MenuItem>Revisão</MenuItem>
        <MenuItem>Exibir</MenuItem>
        <MenuItem>Desenvolvedor</MenuItem>
        <MenuItem>Ajuda</MenuItem>
        <MenuRight>
          <CommentBtn><MessageSquare size={7} />Comentários</CommentBtn>
          <ShareBtn><Share size={7} />Compartilhar</ShareBtn>
          <PenLine size={10} strokeWidth={1} />
        </MenuRight>
      </MenuBar>

      <Ribbon>
        <Group $w={39}>
          <GroupBody>
            <ToolButton w={39} icon={<KeyIcon />} l1="Cadastrar" l2="Chave" />
          </GroupBody>
          <GroupLabel>LICENÇA</GroupLabel>
        </Group>
        <Group $w={153} $pad={2}>
          <GroupBody>
            <ToolButton w={28} icon={<VideoIcon />} l1="Vídeo" l2="aulas" />
            <SmallCol $w={9}>
              <SmallRow><Floppy /></SmallRow>
              <SmallRow><TinySearch /></SmallRow>
              <SmallRow><TinyCalc /></SmallRow>
            </SmallCol>
            <SmallCol $w={10} $ml={9}>
              <SmallRow><TinyDoc /></SmallRow>
              <SmallRow><TinyPrinter /></SmallRow>
              <SmallRow><ExcelMark /></SmallRow>
            </SmallCol>
            <SmallCol $w={53} $ml={9}>
              <SmallRow><KeyGlass />Proteger</SmallRow>
              <SmallRow><LockGlass />Desproteger</SmallRow>
              <SmallRow><Tools />Config.</SmallRow>
            </SmallCol>
            <SmallCol $w={30}>
              <SmallRow><IndentLines /></SmallRow>
              <SmallRow><IndentLines color="#2e9be0" /></SmallRow>
              <SmallRow><GridTiny />Guias</SmallRow>
            </SmallCol>
          </GroupBody>
          <GroupLabel>Ferramentas</GroupLabel>
        </Group>
        <Group $w={87}>
          <GroupBody>
            <ToolButton w={26} icon={<SheetNew />} l1="Criar" l2="Planilha" />
            <ToolButton w={38} icon={<Fx $size={18}>fx</Fx>} l1="Fórmulas" />
            <ToolButton w={18} icon={<Eraser />} l1="" />
          </GroupBody>
        </Group>
        <Group $w={174} $pad={4}>
          <GroupBody>
            {BANCO.map((b) => <ToolButton key={b.l1 + b.l2} {...b} />)}
          </GroupBody>
          <GroupLabel>Banco de dados</GroupLabel>
        </Group>
        <Group $w={195} $pad={3}>
          <GroupBody>
            {MONTAR.map((b) => <ToolButton key={b.l1 + b.l2} {...b} />)}
          </GroupBody>
          <GroupLabel>Montar o Orçamento</GroupLabel>
        </Group>
        <Group $w={148} $pad={2}>
          <GroupBody>
            {COMPOS.map((b) => <ToolButton key={b.l1 + b.l2} {...b} />)}
          </GroupBody>
          <GroupLabel>Composições</GroupLabel>
        </Group>
        <RibbonChevron><ChevronDown size={9} strokeWidth={1.3} /></RibbonChevron>
      </Ribbon>

      <FormulaBar>
        <NameBox>W6<ChevronDown size={7} /></NameBox>
        <FxButtons>
          <span>⋮</span>
          <X size={9} strokeWidth={1} />
          <Check size={9} strokeWidth={1} />
          <Fx $size={9}>fx</Fx>
        </FxButtons>
        <FormulaInput>
          =SEERRO(SE(E((FIMMÊS(V6;0)+1)&gt;=$E$3;(FIMMÊS(V6;0)+1)&lt;=$F$3);FIMMÊS(V6;0)+1;"");"")
          <ChevronDown size={8} strokeWidth={1.3} />
        </FormulaInput>
      </FormulaBar>

      <SheetWrap>
        <Sheet>
          <OutlineStrip>
            <OutlineNums>
              <OutlineNum>1</OutlineNum>
              <OutlineNum>2</OutlineNum>
            </OutlineNums>
            <OutlineTrack>
              <OutlineLine />
              <OutlineDots>
                <OutlineDot />
                <OutlineDot />
                <OutlineDot />
              </OutlineDots>
              <OutlineMinus>−</OutlineMinus>
            </OutlineTrack>
          </OutlineStrip>

          <ColHead>
            <ColCell />
            {LETTERS.map((l) => <ColCell key={l}>{l}</ColCell>)}
            <ColCell />
          </ColHead>

          <HeadGrid>
            {[1, 2, 3, 4].map((n) => <RowNum key={n} $r={n}>{n}</RowNum>)}
            <TealBand />
            <TitleBox>
              <SheetIconUp />
              <SheetIconDown />
              <Title>CRONOGRAMA FÍSICO-FINANCEIRO</Title>
            </TitleBox>
            <TealText $c={3} $r={3} $bold>Custo Total:</TealText>
            <TealText $c={3} $r={4} $bold>Preço Venda:</TealText>
            <TealText $c={4} $r={3}>R$121.221,83</TealText>
            <TealText $c={4} $r={4}>R$164.265,42</TealText>
            <TealText $c={5} $r={2} $align="center">DURAÇÃO</TealText>
            <TealText $c={6} $r={2} $align="center">INÍCIO</TealText>
            <TealText $c={7} $r={2} $align="center">TÉRMINO</TealText>
            <TealText $c={5} $r={3} $align="right">14 meses</TealText>
            <TealText $c={6} $r={3} $align="center">3-mar-22</TealText>
            <TealText $c={7} $r={3} $align="center">27-abr-23</TealText>
            <TealText $c={8} $r={1} $align="right" $bold>MÊS/ANO</TealText>
            <TealText $c={8} $r={2} $align="right" $bold>MENSAL:</TealText>
            <TealText $c={8} $r={3} $align="right" $bold>ACUMULADO:</TealText>
            <TealText $c={8} $r={4} $align="right" $bold $under>% ACUMUL.:</TealText>
            {MONTHS.map((m, i) => (
              <React.Fragment key={m}>
                <MonthTop $c={10 + i} $r={1} $head>{m}</MonthTop>
                <MonthTop $c={10 + i} $r={2}>{MENSAL[i]}</MonthTop>
                <MonthTop $c={10 + i} $r={3}>{ACUM[i]}</MonthTop>
                <MonthTop $c={10 + i} $r={4}>{PCT[i]}</MonthTop>
              </React.Fragment>
            ))}
            <MonthTop $c={21} $r={1} $head />
          </HeadGrid>

          <Row $head>
            <RowNum>6</RowNum>
            <NavyCell>Nr.</NavyCell>
            <NavyCell>CPU</NavyCell>
            <NavyCell>Atividades</NavyCell>
            <NavyCell>Dias</NavyCell>
            <NavyCell $align="center">Início</NavyCell>
            <NavyCell $align="center">Término</NavyCell>
            <NavyCell $align="center">Custo Direto</NavyCell>
            <div />
            {MONTHS.map((m) => <GreenCell key={m}>{m}</GreenCell>)}
            <GreenCell />
          </Row>

          {LINES.map((l, idx) => (
            <Row key={l.nr} $band={l.band}>
              <RowNum>{idx + 7}</RowNum>
              <Cell $band={l.band} $flag={l.band}>{l.nr}</Cell>
              <Cell $band={l.band}>{l.cpu}</Cell>
              <Cell $band={l.band}>{l.name}</Cell>
              <Cell $band={l.band} $align="right">{l.days}</Cell>
              <Cell $band={l.band} $align="center" $flag={l.flags}>{l.start}</Cell>
              <Cell $band={l.band} $align="center" $flag={l.flags}>{l.end}</Cell>
              <Cell $band={l.band} $align="right">{l.cost}</Cell>
              <Cell $band={l.band} />
              {MONTHS.map((m, i) => (
                <MonthCell key={m} $band={l.band} $fill={l.months[i] !== undefined}>
                  {l.months[i]}
                </MonthCell>
              ))}
              <MonthCell $band={l.band} />
            </Row>
          ))}
        </Sheet>
        <FreezeLine />
        <VScroll>
          <ArrowUp />
          <VThumb />
        </VScroll>
      </SheetWrap>

      <TabBar>
        <TabNav>
          <NavArrow $left />
          <NavArrow $dark />
        </TabNav>
        <Tabs>
          {TABS.map((t) => (
            <Tab key={t.label} $w={t.w} $plain={t.plain} $active={t.active}>{t.label}</Tab>
          ))}
        </Tabs>
        <TabExtras>
          <span>…</span>
          <AddSheet><Plus size={6} /></AddSheet>
          <span>⋮</span>
        </TabExtras>
        <HScroll>
          <NavArrow $left />
          <HThumb />
          <HEnd><NavArrow /></HEnd>
        </HScroll>
      </TabBar>

      <StatusBar>
        Pronto
        <StatusCheck><CheckSheet /></StatusCheck>
        <StatusAccess><KeyGlass fill="none" />Acessibilidade: Investigar</StatusAccess>
        <StatusRight>
          <ViewBtn $w={19} $on><ViewGrid /></ViewBtn>
          <ViewBtn $w={22}><ViewPage /></ViewBtn>
          <ViewBtn $w={22}><ViewBreak /></ViewBtn>
          <Minus size={6} />
          <ZoomTrack><ZoomThumb /></ZoomTrack>
          <Plus size={6} />
          <ZoomPct>100%</ZoomPct>
        </StatusRight>
      </StatusBar>

      <Taskbar>
        <StartBtn><WindowsLogo /></StartBtn>
        <TaskSearch>
          <Search size={10} strokeWidth={1.5} style={{ transform: "scaleX(-1)" }} />
          Digite aqui para pesquisar
        </TaskSearch>
        <TaskApps>
          <TaskApp $w={26}><Circle size={9} strokeWidth={1.5} /></TaskApp>
          <TaskApp $w={26}><TaskView /></TaskApp>
          <TaskApp $w={26} $open><FolderApp /></TaskApp>
          <TaskApp $w={26} $open><ChromeApp /></TaskApp>
          <TaskApp $w={26}><FilesApp /></TaskApp>
          <TaskApp $w={26} $open><EdgeApp /></TaskApp>
          <TaskApp $w={26} $open><AccessMark s={13} /></TaskApp>
          <TaskApp $w={26} $on $open><ExcelMark s={13} /></TaskApp>
        </TaskApps>
        <Tray>
          <TrayIcon $w={19}><MoonCloud /></TrayIcon>
          <TrayText $w={20}>28°C</TrayText>
          <TrayText $w={41}>Pred. limpo</TrayText>
          <TrayIcon $w={16}><ChevronDown size={8} style={{ transform: "rotate(180deg)" }} /></TrayIcon>
          <TrayIcon $w={12}><DeviceTray /></TrayIcon>
          <TrayIcon $w={12}><CloudTray /></TrayIcon>
          <TrayIcon $w={14}><Wifi size={8} /></TrayIcon>
          <TrayIcon $w={10}><Volume1 size={8} /></TrayIcon>
          <Clock>
            18:44
            <br />
            08/03/2022
          </Clock>
          <NotifyBox>
            <NotifyIcon />
            <NotifyBadge>1</NotifyBadge>
          </NotifyBox>
        </Tray>
      </Taskbar>
    </Windowed>
  );
}

export default App;
